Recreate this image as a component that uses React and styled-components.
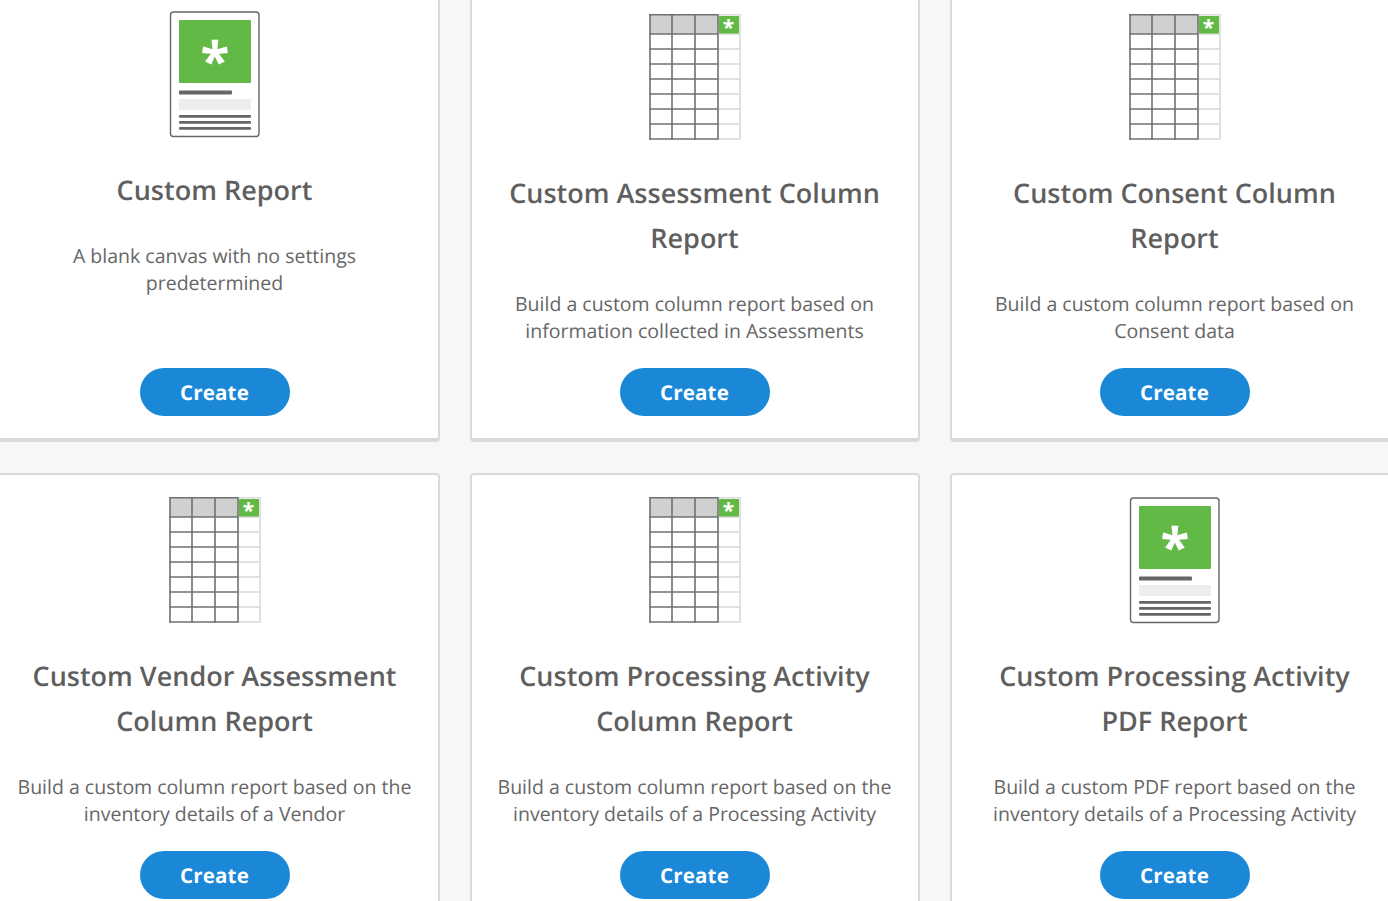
import React from "react";
import styled, { createGlobalStyle } from "styled-components";

const Global = createGlobalStyle`
  html, body { margin: 0; padding: 0; background: #f7f7f7; height: 100%; overflow: hidden; }
  body {
    font-family: "Open Sans", "Liberation Sans", sans-serif;
    text-rendering: geometricPrecision;
  }
`;

const Viewport = styled.main`
  width: 1388px;
  height: 901px;
  overflow: hidden;
`;

const Grid = styled.div`
  display: grid;
  grid-template-columns: repeat(3, 450px);
  grid-auto-rows: 452px;
  column-gap: 30px;
  row-gap: 31px;
  margin: -10px 0 0 -10px;
  width: 1420px;
`;

const Card = styled.article`
  box-sizing: border-box;
  display: flex;
  flex-direction: column;
  align-items: center;
  background: #fff;
  border: 2px solid #dadada;
  border-bottom-width: 4px;
  border-radius: 4px;
  padding: ${(p) => (p.$lift ? "19px" : "22px")} 16px 22px;
  text-align: center;
`;

const IconSlot = styled.div`
  height: 128px;
  display: flex;
  justify-content: center;
  svg { display: block; margin-top: -6px; }
`;

const Title = styled.h2`
  margin: 28px 1px 0 0;
  font-size: 27px;
  line-height: 45px;
  font-weight: 600;
  color: #5f5f5f;
  width: 400px;
`;

const Description = styled.p`
  margin: 30px 1px 0 0;
  font-size: 19.5px;
  line-height: 27px;
  font-weight: 400;
  color: #666;
  width: 410px;
`;

const CreateButton = styled.button`
  margin-top: auto;
  width: 150px;
  height: 48px;
  flex: none;
  border: 0;
  border-radius: 24px;
  padding: 2px 1px 0 0;
  background: #1b88d7;
  color: #fff;
  font-family: inherit;
  font-size: 20.5px;
  font-weight: 700;
  letter-spacing: 0.2px;
  text-rendering: inherit;
`;

const Star = ({ x, y, size }) => (
  <text x={x} y={y} fill="#fff" fontFamily="Open Sans" fontWeight="700" fontSize={size} textAnchor="middle">
    *
  </text>
);

const DocIcon = () => (
  <svg width="92" height="134" viewBox="0 -6 92 134">
    <rect x="1.5" y="1" width="88.5" height="124.5" rx="3" fill="#fff" stroke="#666" strokeWidth="1.4" />
    <rect x="10" y="9" width="72" height="63" rx="1" fill="#62b945" />
    <Star x="46" y="69" size="53" />
    <rect x="10" y="79.5" width="53" height="4" rx="1" fill="#666" />
    <rect x="10" y="88" width="72" height="11" fill="#ededed" />
    <rect x="10" y="104" width="72" height="2.8" rx="1" fill="#666" />
    <rect x="10" y="110" width="72" height="2.8" rx="1" fill="#666" />
    <rect x="10" y="116" width="72" height="2.8" rx="1" fill="#666" />
  </svg>
);

const rowYs = [20, 35, 50, 65, 80, 95, 110, 125];
const colXs = [1, 23, 46, 69];

const TableIcon = () => (
  <svg width="92" height="134" viewBox="0 -6 92 134">
    <rect x="1" y="1" width="68" height="19" fill="#d0d0d0" />
    <g stroke="#dcdcdc" strokeWidth="1.7" fill="none">
      {rowYs.map((y) => <path key={y} d={`M69 ${y}H91`} />)}
      <path d="M69 .75H91V125.5" />
    </g>
    <g stroke="#707070" strokeWidth="1.6" fill="none">
      <path d="M.25 .75H69" />
      {rowYs.map((y) => <path key={y} d={`M.25 ${y}H69`} />)}
      {colXs.map((x) => <path key={x} d={`M${x} 0V125.8`} />)}
    </g>
    <rect x="70" y="2" width="20" height="17.5" rx="1" fill="#62b945" />
    <Star x="79.5" y="21" size="21" />
  </svg>
);

const cards = [
  { icon: "doc", lift: true, title: "Custom Report", desc: "A blank canvas with no settings predetermined" },
  { icon: "table", title: "Custom Assessment Column Report", desc: "Build a custom column report based on information collected in Assessments" },
  { icon: "table", title: "Custom Consent Column Report", desc: "Build a custom column report based on Consent data" },
  { icon: "table", title: "Custom Vendor Assessment Column Report", desc: "Build a custom column report based on the inventory details of a Vendor" },
  { icon: "table", title: "Custom Processing Activity Column Report", desc: "Build a custom column report based on the inventory details of a Processing Activity" },
  { icon: "doc", title: "Custom Processing Activity PDF Report", desc: "Build a custom PDF report based on the inventory details of a Processing Activity" },
];

export default function App() {
  return (
    <Viewport>
      <Global />
      <Grid>
        {cards.map((c) => (
          <Card key={c.title} $lift={c.lift}>
            <IconSlot>{c.icon === "doc" ? <DocIcon /> : <TableIcon />}</IconSlot>
            <Title>{c.title}</Title>
            <Description>{c.desc}</Description>
            <CreateButton type="button">Create</CreateButton>
          </Card>
        ))}
      </Grid>
    </Viewport>
  );
}
